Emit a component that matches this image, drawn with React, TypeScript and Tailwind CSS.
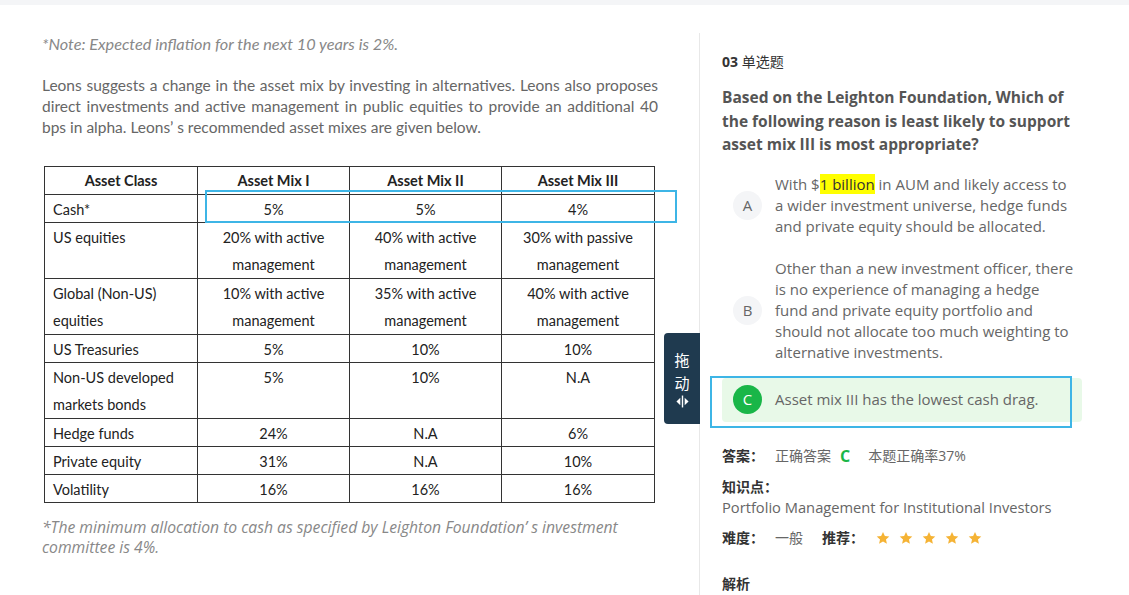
import React from "react";

const latin = "font-['Open_Sans','Noto_Sans_CJK_SC',sans-serif]";

type Row = { label: string[]; cells: string[][]; tall?: boolean };

const rows: Row[] = [
  { label: ["Cash*"], cells: [["5%"], ["5%"], ["4%"]] },
  {
    label: ["US equities"],
    cells: [
      ["20% with active", "management"],
      ["40% with active", "management"],
      ["30% with passive", "management"],
    ],
    tall: true,
  },
  {
    label: ["Global (Non-US)", "equities"],
    cells: [
      ["10% with active", "management"],
      ["35% with active", "management"],
      ["40% with active", "management"],
    ],
    tall: true,
  },
  { label: ["US Treasuries"], cells: [["5%"], ["10%"], ["10%"]] },
  {
    label: ["Non-US developed", "markets bonds"],
    cells: [["5%"], ["10%"], ["N.A"]],
    tall: true,
  },
  { label: ["Hedge funds"], cells: [["24%"], ["N.A"], ["6%"]] },
  { label: ["Private equity"], cells: [["31%"], ["N.A"], ["10%"]] },
  { label: ["Volatility"], cells: [["16%"], ["16%"], ["16%"]] },
];

function Lines({ lines }: { lines: string[] }) {
  return (
    <>
      {lines.map((l, i) => (
        <div key={i}>{l}</div>
      ))}
    </>
  );
}

function AssetTable() {
  return (
    <div className="ml-[2px] w-[611px] border-l border-t border-[#333] grid grid-cols-[153px_152px_152px_153px] text-[14.5px] leading-[27px] text-[#222] font-['Lato',sans-serif]">
      {["Asset Class", "Asset Mix I", "Asset Mix II", "Asset Mix III"].map((h) => (
        <div
          key={h}
          className="h-[28px] border-r border-b border-[#333] text-center font-bold"
        >
          {h}
        </div>
      ))}
      {rows.map((r) => (
        <React.Fragment key={r.label[0]}>
          <div
            className={`${r.tall ? "h-[56px]" : "h-[28px]"} border-r border-b border-[#333] pl-[8px] pt-px`}
          >
            <Lines lines={r.label} />
          </div>
          {r.cells.map((c, i) => (
            <div
              key={i}
              className={`${r.tall ? "h-[56px]" : "h-[28px]"} border-r border-b border-[#333] text-center pt-px`}
            >
              <Lines lines={c} />
            </div>
          ))}
        </React.Fragment>
      ))}
    </div>
  );
}

function Star() {
  return (
    <svg width="14" height="14" viewBox="0 0 24 24" className="fill-[#f5b335]">
      <path d="M12 1.5l3.2 7 7.6.8-5.7 5.1 1.6 7.5L12 18l-6.7 3.9 1.6-7.5L1.2 9.3l7.6-.8z" />
    </svg>
  );
}

function Option({
  letter,
  lines,
  correct,
}: {
  letter: string;
  lines: string[];
  correct?: boolean;
}) {
  return (
    <div
      className={`flex items-center pl-[11px] ${correct ? "h-[44px] bg-[#e8f9e8] rounded-[4px]" : ""}`}
    >
      <div
        className={`w-[29px] h-[29px] rounded-full flex items-center justify-center text-[15px] shrink-0 ${
          correct ? "bg-[#19b648] text-white" : "bg-[#f4f5f7] text-[#666]"
        }`}
      >
        {letter}
      </div>
      <div className="ml-[13px] text-[15px] leading-[21px] text-[#666] whitespace-nowrap">
        {lines.map((l, i) => (
          <div key={i}>
            {l === "A1" ? (
              <>
                With $<span className="bg-[#ffff00] text-[#333]">1 billion</span> in AUM
                and likely access to
              </>
            ) : (
              l
            )}
          </div>
        ))}
      </div>
    </div>
  );
}

export default function App() {
  return (
    <div className={`relative h-[595px] w-[1129px] overflow-hidden bg-white ${latin}`}>
      <div className="h-[5px] bg-[#f4f5f7]" />
      <div className="flex h-[590px]">
        {/* left: case material */}
        <div className="w-[699px] shrink-0 pl-[42px] pt-[28px] font-['Lato',sans-serif]">
          <p className="italic text-[16.3px] leading-[21px] text-[#888]">
            *Note: Expected inflation for the next 10 years is 2%.
          </p>
          <div className="mt-[21px] w-[616px] text-[15.5px] leading-[21px] text-[#666]">
            <div className="[text-align-last:justify]">
              Leons suggests a change in the asset mix by investing in alternatives. Leons also
              proposes
            </div>
            <div className="[text-align-last:justify]">
              direct investments and active management in public equities to provide an
              additional 40
            </div>
            <div>bps in alpha. Leons’ s recommended asset mixes are given below.</div>
          </div>
          <div className="mt-[28px]">
            <AssetTable />
          </div>
          <div className="mt-[14px] italic text-[15.7px] leading-[20px] text-[#888] font-['Open_Sans',sans-serif]">
            <div>
              *The minimum allocation to cash as specified by Leighton Foundation’ s investment
            </div>
            <div>committee is 4%.</div>
          </div>
        </div>

        <div className="w-px bg-[#e8e8e8] mt-[28px]" />

        {/* right: question */}
        <div className="pl-[22px] pt-[47px]">
          <div className="text-[14px] leading-[20px] text-[#333]">
            <span className="font-bold">03</span> 单选题
          </div>
          <div className="mt-[14px] text-[15.5px] leading-[23.5px] font-bold text-[#555] whitespace-nowrap">
            <div>Based on the Leighton Foundation, Which of</div>
            <div>the following reason is least likely to support</div>
            <div>asset mix III is most appropriate?</div>
          </div>

          <div className="w-[360px] mt-[17px]">
            <Option
              letter="A"
              lines={[
                "A1",
                "a wider investment universe, hedge funds",
                "and private equity should be allocated.",
              ]}
            />
            <div className="mt-[21px]">
              <Option
                letter="B"
                lines={[
                  "Other than a new investment officer, there",
                  "is no experience of managing a hedge",
                  "fund and private equity portfolio and",
                  "should not allocate too much weighting to",
                  "alternative investments.",
                ]}
              />
            </div>
            <div className="mt-[15px]">
              <Option letter="C" lines={["Asset mix III has the lowest cash drag."]} correct />
            </div>
          </div>

          <div className="mt-[24px] flex items-center text-[14px] leading-[20px] text-[#666]">
            <span className="w-[53px] font-bold text-[#333]">答案：</span>
            <span>正确答案</span>
            <span className="ml-[9px] font-bold text-[16px] text-[#19b648]">C</span>
            <span className="ml-[18px]">本题正确率37%</span>
          </div>
          <div className="mt-[11px] text-[14px] leading-[20px] font-bold text-[#333]">知识点：</div>
          <div className="text-[14.7px] leading-[21px] text-[#666]">
            Portfolio Management for Institutional Investors
          </div>
          <div className="mt-[10px] flex items-center text-[14px] leading-[20px] text-[#666]">
            <span className="w-[53px] font-bold text-[#333]">难度：</span>
            <span>一般</span>
            <span className="ml-[19px] font-bold text-[#333]">推荐：</span>
            <div className="ml-[12px] flex gap-[9px]">
              <Star />
              <Star />
              <Star />
              <Star />
              <Star />
            </div>
          </div>
          <div className="mt-[26px] text-[14px] leading-[20px] font-bold text-[#333]">解析</div>
        </div>
      </div>

      {/* drag handle */}
      <div className="absolute left-[664px] top-[333px] w-[36px] h-[91px] bg-[#1f3a4f] rounded-l-[4px] flex flex-col items-center pt-[15px] text-white text-[15px] leading-[23px] font-['Noto_Sans_CJK_SC',sans-serif]">
        <span>拖</span>
        <span>动</span>
        <svg width="13" height="13" viewBox="0 0 12 12" className="mt-[1px] fill-white">
          <path d="M4 2.5v7L0.4 6z" />
          <rect x="5.35" y="0.5" width="1.3" height="11" />
          <path d="M8 2.5v7L11.6 6z" />
        </svg>
      </div>

      {/* highlight annotations */}
      <div className="absolute left-[205px] top-[190px] w-[472px] h-[33px] border-2 border-[#3db5e6]" />
      <div className="absolute left-[710px] top-[376px] w-[362px] h-[52px] border-2 border-[#3db5e6]" />
    </div>
  );
}
